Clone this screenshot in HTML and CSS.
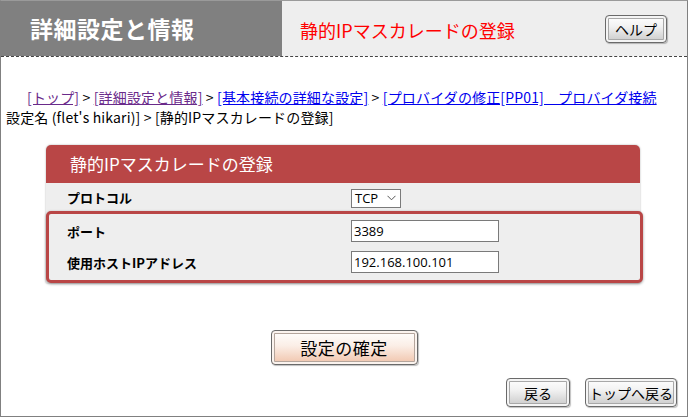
FILE: index.html
```html
<!DOCTYPE html>
<html lang="ja">
<head>
<meta charset="utf-8">
<title>静的IPマスカレードの登録</title>
<link rel="stylesheet" href="styles.css">
</head>
<body>
<div class="frame">
  <header class="top">
    <div class="top-left"><h1 class="site-title">詳細設定と情報</h1></div>
    <div class="top-right">
      <h2 class="page-title">静的IPマスカレードの登録</h2>
      <button class="btn btn-help">ヘルプ</button>
    </div>
  </header>

  <nav class="crumbs">
    <div class="crumb-line first"><a class="visited" href="#">[トップ]</a> &gt; <a class="visited" href="#">[詳細設定と情報]</a> &gt; <a href="#">[基本接続の詳細な設定]</a> &gt; <a href="#">[プロバイダの修正[PP01]　プロバイダ接続</a></div>
    <div class="crumb-line">設定名 (flet's hikari)] &gt; [静的IPマスカレードの登録]</div>
  </nav>

  <section class="panel">
    <div class="panel-head">静的IPマスカレードの登録</div>
    <div class="row row-plain">
      <div class="label">プロトコル</div>
      <div class="field">
        <span class="select">TCP<svg class="chev" width="9" height="6" viewBox="0 0 9 6"><path d="M0.5 0.8 L4.5 4.8 L8.5 0.8" fill="none" stroke="#555" stroke-width="1"/></svg></span>
      </div>
    </div>
    <div class="group">
      <div class="row">
        <div class="label">ポート</div>
        <div class="field"><span class="input">3389</span></div>
      </div>
      <div class="row">
        <div class="label">使用ホストIPアドレス</div>
        <div class="field"><span class="input">192.168.100.101</span></div>
      </div>
    </div>
  </section>

  <div class="confirm-wrap">
    <button class="btn btn-confirm">設定の確定</button>
  </div>

  <div class="bottom-nav">
    <button class="btn btn-back">戻る</button>
    <button class="btn btn-top">トップへ戻る</button>
  </div>
</div>
</body>
</html>
```

FILE: styles.css
```css
html, body {
  margin: 0;
  padding: 0;
  background: #ffffff;
}
body {
  font-family: "Noto Sans CJK JP", "Noto Sans", sans-serif;
  font-size: 13px;
  color: #000;
}
.frame {
  width: 686px;
  height: 415px;
  border: 1px solid #808080;
  border-top-color: #9a9a9a;
  display: flex;
  flex-direction: column;
  overflow: hidden;
}
.top {
  display: flex;
  height: 55px;
  border-bottom: 1px dashed #444;
}
.top-left {
  width: 281px;
  background: #808080;
  display: flex;
  align-items: center;
}
.site-title {
  margin: 0 0 0 29px;
  color: #fff;
  font-size: 23px;
  font-weight: bold;
  letter-spacing: 0.5px;
  line-height: 1;
}
.top-right {
  flex: 1;
  background: #eeeeee;
  display: flex;
  align-items: center;
  justify-content: space-between;
  padding: 0 20px 0 18px;
}
.page-title {
  margin: 2px 0 0 0;
  color: #ff0000;
  font-size: 18px;
  font-weight: normal;
  line-height: 1;
}
.btn {
  font-family: "Noto Sans CJK JP", sans-serif;
  color: #000;
  border: 1px solid #6a6a6a;
  border-radius: 4px;
  background: linear-gradient(#ffffff 0%, #f2f2f2 40%, #c9c9c9 100%);
  box-shadow: inset 0 0 0 2px #f4f4f4, inset 0 0 0 3px #a8a8a8, 1px 1px 1px rgba(0,0,0,0.25);
  padding: 0;
  line-height: 1;
}
.btn-help {
  width: 62px;
  height: 28px;
  font-size: 14px;
  margin-top: 1px;
}
.crumbs {
  margin-top: 30px;
  padding-left: 5px;
  line-height: 20px;
  font-size: 14px;
  letter-spacing: 0.15px;
  white-space: nowrap;
}
.crumb-line.first {
  padding-left: 21px;
}
.crumbs a {
  color: #0000ee;
  text-decoration: underline;
}
.crumbs a.visited {
  color: #6a2a8a;
}
.panel {
  margin: 18px 0 0 45px;
  width: 594px;
  border-radius: 5px 5px 0 0;
  box-shadow: 0 0 2px rgba(0,0,0,0.35);
  background: #eeeeee;
}
.panel-head {
  height: 38px;
  background: #b94646;
  color: #fff;
  font-size: 17px;
  line-height: 38px;
  padding-left: 24px;
  border-radius: 5px 5px 0 0;
}
.row {
  display: grid;
  grid-template-columns: 284px 1fr;
  align-items: center;
}
.row-plain {
  height: 28px;
  padding-left: 21px;
}
.label {
  font-weight: bold;
  font-size: 13px;
}
.group {
  border: 3px solid #b94646;
  border-radius: 5px;
  background: #eeeeee;
  box-shadow: 0 1px 3px rgba(0,0,0,0.4);
  padding: 6px 0 7px 18px;
  display: flex;
  flex-direction: column;
  gap: 9px;
  margin-right: -3px;
}
.select {
  display: inline-flex;
  align-items: center;
  gap: 9px;
  width: 42px;
  height: 17px;
  padding: 0 3px;
  border: 1px solid #7a7a7a;
  background: #fff;
  font-size: 13px;
  font-family: "Open Sans", "Liberation Sans", sans-serif;
  margin-top: 2px;
}
.input {
  display: block;
  width: 142px;
  height: 20px;
  line-height: 20px;
  padding: 0 2px;
  border: 1px solid #7a7a7a;
  background: #fff;
  font-size: 13px;
  font-family: "Open Sans", "Liberation Sans", sans-serif;
}
.confirm-wrap {
  display: flex;
  justify-content: center;
  margin-top: 47px;
}
.btn-confirm {
  width: 147px;
  height: 35px;
  font-size: 17px;
  letter-spacing: 0.5px;
  background: linear-gradient(#ffffff 0%, #fbeee6 45%, #f0c3aa 100%);
  box-shadow: inset 0 0 0 2px #fbf3ee, inset 0 0 0 3px #b4a59c, 1px 1px 1px rgba(0,0,0,0.25);
}
.bottom-nav {
  display: flex;
  justify-content: flex-end;
  gap: 15px;
  margin-top: 13px;
  padding-right: 10px;
}
.btn-back {
  width: 64px;
  height: 29px;
  font-size: 14px;
}
.btn-top {
  width: 92px;
  height: 29px;
  font-size: 14px;
}
```
